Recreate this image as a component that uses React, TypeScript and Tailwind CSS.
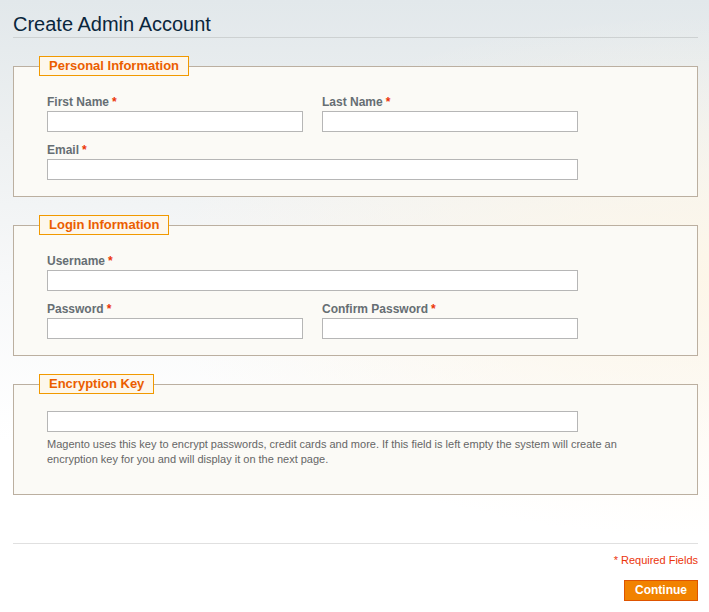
import React from 'react';

const Req: React.FC = () => <span className="ml-[3px] text-[#eb340a]">*</span>;

const Field: React.FC<{ label: string; className?: string }> = ({ label, className = 'w-[256px]' }) => (
  <div className={className}>
    <label className="block text-[12px] leading-[16px] font-bold text-[#666e73] mb-[1px]">
      {label}
      <Req />
    </label>
    <input type="text" className="block w-full h-[21px] border border-[#b6b6b6] bg-white outline-none px-1 text-[12px]" />
  </div>
);

const Fieldset: React.FC<{ legend: string; className?: string; children: React.ReactNode }> = ({ legend, className = '', children }) => (
  <fieldset className={`border border-[#bbafa0] bg-[#fbfaf6] p-0 ${className}`}>
    <legend className="ml-[25px] px-[9px] border border-[#f19900] bg-[#fdf7ec] text-[13px] leading-[18px] font-bold text-[#eb5e00]">
      {legend}
    </legend>
    {children}
  </fieldset>
);

export default function App() {
  return (
    <div className="min-h-screen font-['Liberation_Sans',Arial,sans-serif] bg-[radial-gradient(ellipse_at_100%_45%,rgba(253,246,232,0.95)_0%,rgba(253,246,232,0)_55%),linear-gradient(180deg,#e2e8eb_0%,#edf0f1_22%,#f7f8f9_45%,#ffffff_72%)]">
      <div className="ml-[13px] w-[685px] pb-[11px]">
        {/* 标题 */}
        <h1 className="pt-[12px] pb-[1px] text-[20px] leading-[24px] font-normal text-[#0a263c] border-b border-[#cdd1d2]">
          Create Admin Account
        </h1>

        <Fieldset legend="Personal Information" className="mt-[18px]">
          <div className="px-[33px] pt-[18px] pb-[16px] flex flex-col gap-[10px]">
            <div className="flex gap-[19px]">
              <Field label="First Name" />
              <Field label="Last Name" />
            </div>
            <Field label="Email" className="w-[531px]" />
          </div>
        </Fieldset>

        <Fieldset legend="Login Information" className="mt-[18px]">
          <div className="px-[33px] pt-[18px] pb-[16px] flex flex-col gap-[10px]">
            <Field label="Username" className="w-[531px]" />
            <div className="flex gap-[19px]">
              <Field label="Password" />
              <Field label="Confirm Password" />
            </div>
          </div>
        </Fieldset>

        <Fieldset legend="Encryption Key" className="mt-[18px]">
          <div className="px-[33px] pt-[17px] pb-[27px]">
            <input type="text" className="block w-[531px] h-[21px] border border-[#b6b6b6] bg-white outline-none px-1 text-[12px]" />
            <p className="mt-[5px] text-[11px] leading-[15px] text-[#666]">
              Magento uses this key to encrypt passwords, credit cards and more. If this field is left empty the system will create an encryption key for you and will display it on the next page.
            </p>
          </div>
        </Fieldset>

        <div className="mt-[48px] border-t border-[#e0e0e0] pt-[9px] flex flex-col items-end">
          <p className="text-[11px] leading-[15px] text-[#eb340a]">* Required Fields</p>
          <button className="mt-[12px] h-[21px] px-[10px] bg-[#f18200] border border-[#de5400] text-white text-[12px] font-bold leading-[19px]">
            Continue
          </button>
        </div>
      </div>
    </div>
  );
}
